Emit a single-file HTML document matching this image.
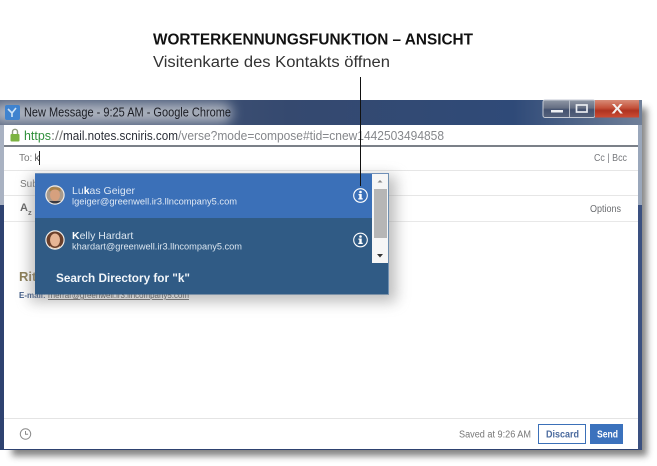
<!DOCTYPE html>
<html><head><meta charset="utf-8"><style>
html,body{margin:0;padding:0;background:#fff;width:657px;height:466px;overflow:hidden}
svg{display:block;filter:blur(.3px)}
text{font-family:"Liberation Sans",sans-serif}
</style></head><body>
<svg width="657" height="466" viewBox="0 0 657 466" xmlns="http://www.w3.org/2000/svg">
<defs>
<linearGradient id="tb" x1="0" x2="1" y1="0" y2="0"><stop offset="0" stop-color="#51607c"/><stop offset=".45" stop-color="#35496f"/><stop offset=".8" stop-color="#2f4a78"/><stop offset="1" stop-color="#6f7f98"/></linearGradient>
<linearGradient id="wb" x1="0" x2="0" y1="0" y2="1"><stop offset="0" stop-color="#8f97a5"/><stop offset=".45" stop-color="#666f83"/><stop offset=".55" stop-color="#445270"/><stop offset="1" stop-color="#55627c"/></linearGradient>
<linearGradient id="cb" x1="0" x2="0" y1="0" y2="1"><stop offset="0" stop-color="#d88c78"/><stop offset=".45" stop-color="#c4513a"/><stop offset=".6" stop-color="#ae3320"/><stop offset="1" stop-color="#cc4c34"/></linearGradient>
<filter id="s4" x="-10%" y="-10%" width="120%" height="120%"><feGaussianBlur stdDeviation="3.5"/></filter>
<filter id="s8" x="-10%" y="-20%" width="120%" height="140%"><feGaussianBlur stdDeviation="7"/></filter>
<filter id="s7" x="-20%" y="-80%" width="140%" height="260%"><feGaussianBlur stdDeviation="6"/></filter>
<clipPath id="tc"><rect x="0" y="100" width="642" height="25"/></clipPath>
<clipPath id="a1"><circle cx="55" cy="195" r="8.5"/></clipPath>
<clipPath id="a2"><circle cx="55" cy="240" r="8.5"/></clipPath>
</defs>

<text x="153" y="44.5" font-size="15.5" font-weight="700" fill="#111" textLength="320" lengthAdjust="spacingAndGlyphs">WORTERKENNUNGSFUNKTION – ANSICHT</text>
<text x="153" y="67" font-size="15.5" fill="#333" textLength="237" lengthAdjust="spacingAndGlyphs">Visitenkarte des Kontakts öffnen</text>

<!-- window shadow -->
<rect x="12" y="108" width="635" height="348" fill="#666" filter="url(#s4)" opacity=".8"/>
<!-- frame -->
<rect x="0" y="100" width="642" height="350" fill="#2e4270"/>
<rect x="0" y="100" width="642" height="25" fill="url(#tb)"/>
<rect x="0" y="125" width="4" height="80" fill="#a9b2c2"/>
<rect x="638" y="125" width="4" height="80" fill="#9aa7bb"/>
<rect x="638" y="205" width="4" height="245" fill="#3a5080"/>
<g clip-path="url(#tc)"><rect x="-8" y="103" width="240" height="20" rx="10" fill="#b4b9c3" filter="url(#s7)" opacity=".95"/></g>

<!-- favicon -->
<rect x="5" y="105" width="15" height="15" rx="2" fill="#3f83cf"/>
<path d="M8 109l4 4 4-5M12 113v4" stroke="#cfe4f7" stroke-width="1.6" fill="none"/>
<text x="24" y="116.5" font-size="12.5" fill="#1b1d24" textLength="207" lengthAdjust="spacingAndGlyphs">New Message - 9:25 AM - Google Chrome</text>

<!-- window buttons -->
<rect x="543" y="100" width="52" height="17.5" rx="2" fill="url(#wb)" stroke="#c4cad4" stroke-width="1"/>
<line x1="569.5" y1="100" x2="569.5" y2="117" stroke="#b5bbc6"/>
<rect x="595" y="100" width="44" height="17.5" fill="url(#cb)"/>
<rect x="551" y="110" width="12" height="2.5" fill="#eef0f3"/>
<rect x="576.5" y="105" width="10.5" height="7" fill="none" stroke="#e8ebf0" stroke-width="1.7"/>
<text x="611.5" y="113.5" font-size="14" font-weight="700" fill="#f4f0ee" textLength="11.5" lengthAdjust="spacingAndGlyphs">X</text>

<!-- address bar -->
<rect x="4" y="125" width="634" height="20" fill="#fff"/>
<rect x="4" y="145" width="634" height="2" fill="#7b8088"/>
<rect x="10.5" y="134" width="9" height="7.5" rx="1" fill="#7cb342"/>
<path d="M12.5 134v-2.2a2.5 2.5 0 0 1 5 0V134" fill="none" stroke="#8f9a80" stroke-width="1.4"/>
<text x="24" y="140" font-size="13" fill="#2f8f3a" textLength="27" lengthAdjust="spacingAndGlyphs">https</text>
<text x="51" y="140" font-size="13" fill="#777" textLength="12" lengthAdjust="spacingAndGlyphs">://</text>
<text x="63" y="140" font-size="13" fill="#2b2f38" textLength="115" lengthAdjust="spacingAndGlyphs">mail.notes.scniris.com</text>
<text x="178" y="140" font-size="13" fill="#85878b" textLength="266" lengthAdjust="spacingAndGlyphs">/verse?mode=compose#tid=cnew1442503494858</text>

<!-- content -->
<rect x="4" y="147" width="634" height="302" fill="#fff"/>
<text x="19" y="161" font-size="10" fill="#777">To:</text>
<text x="34.500" y="161" font-size="10" fill="#555">k</text>
<rect x="39" y="151" width="1" height="14" fill="#222"/>
<text x="594" y="161" font-size="10.5" fill="#77797d" textLength="33" lengthAdjust="spacingAndGlyphs">Cc | Bcc</text>
<line x1="4" x2="638" y1="170.5" y2="170.5" stroke="#e6e6e6"/>
<text x="20" y="187" font-size="10" fill="#777">Sub</text>
<line x1="4" x2="638" y1="195.5" y2="195.5" stroke="#e6e6e6"/>
<text x="20" y="211" font-size="11" font-weight="700" fill="#666">A</text>
<text x="28" y="215" font-size="7.5" font-weight="700" fill="#666">z</text>
<text x="590" y="212" font-size="10.5" fill="#6b6d70" textLength="31" lengthAdjust="spacingAndGlyphs">Options</text>
<line x1="4" x2="638" y1="221.5" y2="221.5" stroke="#e8e8e8"/>

<text x="19" y="281" font-size="13" font-weight="700" fill="#8b7d55">Ritt</text>
<text x="19" y="298" font-size="8" font-weight="700" fill="#3f5a86">E-mail:</text>
<text x="48" y="298" font-size="8" fill="#444" text-decoration="underline" textLength="141" lengthAdjust="spacingAndGlyphs">rherrar@greenwell.ir3.llncompany5.com</text>

<line x1="4" x2="638" y1="418.5" y2="418.5" stroke="#e4e4e4"/>
<circle cx="25.5" cy="434" r="5.2" fill="none" stroke="#8a8a8a" stroke-width="1"/>
<path d="M25.5 431v3.3h2.6" fill="none" stroke="#8a8a8a" stroke-width="1"/>
<text x="459" y="437.5" font-size="10" fill="#777" textLength="72" lengthAdjust="spacingAndGlyphs">Saved at 9:26 AM</text>
<rect x="538.5" y="424.5" width="47" height="19" fill="#fff" stroke="#3b70b8"/>
<text x="546" y="437.5" font-size="10" font-weight="700" fill="#4a6a9e" textLength="33" lengthAdjust="spacingAndGlyphs">Discard</text>
<rect x="590" y="424" width="33" height="20" fill="#3b72bd"/>
<text x="597" y="437.5" font-size="10" font-weight="700" fill="#fff" textLength="21" lengthAdjust="spacingAndGlyphs">Send</text>

<!-- dropdown -->
<rect x="30" y="176" width="366" height="126" fill="#888" filter="url(#s8)" opacity=".55"/>
<rect x="35" y="173" width="354" height="121.5" fill="#305b85"/>
<rect x="35" y="173" width="337" height="45" fill="#3b70b8"/>
<rect x="372" y="173" width="16" height="90" fill="#f6f6f6"/>
<rect x="388" y="173" width="1" height="121" fill="#6f8fb0"/>
<rect x="35" y="173" width="354" height="1" fill="#6f8fb8"/>
<rect x="374" y="189" width="13" height="49" fill="#b6b6b6"/>
<path d="M377.5 182.5h5l-2.5-2.5z" fill="#888"/>
<path d="M377 254h6l-3 3.5z" fill="#333"/>

<!-- avatars -->
<circle cx="55" cy="195" r="9.7" fill="#eeebe6"/>
<g clip-path="url(#a1)"><rect x="45" y="185" width="20" height="20" fill="#a89a8c"/><ellipse cx="55" cy="195" rx="5" ry="6" fill="#d6a07e"/><rect x="46" y="201" width="18" height="6" fill="#3a3a42"/><path d="M49.5 192q5.5-5 11 0l0-4-11-1.5z" fill="#a8824a"/></g>
<circle cx="55" cy="240" r="9.7" fill="#eeebe6"/>
<g clip-path="url(#a2)"><rect x="45" y="230" width="20" height="20" fill="#6a3f2a"/><ellipse cx="55" cy="240" rx="5" ry="6.5" fill="#e6b595"/><path d="M50 246q5 4 10 0v5H50z" fill="#efd2ba"/></g>

<!-- item text -->
<text x="72" y="194" font-size="10.5" fill="#dbe6f4">Lu<tspan font-weight="700" fill="#fff">k</tspan>as Geiger</text>
<text x="72" y="204.5" font-size="9" fill="#dfe8f4" textLength="165" lengthAdjust="spacingAndGlyphs">lgeiger@greenwell.ir3.llncompany5.com</text>
<text x="72" y="239" font-size="10.5" fill="#dbe6f0"><tspan font-weight="700" fill="#fff">K</tspan>elly Hardart</text>
<text x="72" y="249.5" font-size="9" fill="#dbe6f0" textLength="170" lengthAdjust="spacingAndGlyphs">khardart@greenwell.ir3.llncompany5.com</text>
<text x="56" y="282" font-size="12" font-weight="700" fill="#f2f6fa" textLength="134" lengthAdjust="spacingAndGlyphs">Search Directory for "k"</text>

<!-- info icons -->
<g fill="none" stroke="#fff" stroke-width="1.1"><circle cx="360.5" cy="195.5" r="6.8"/><circle cx="360.5" cy="240" r="6.8"/></g>
<g fill="#fff"><circle cx="360.5" cy="192" r="1.3"/><path d="M358.5 194h3.2v4.3h1v1.2h-4.4v-1.2h1v-3.1h-.8z"/><circle cx="360.5" cy="236.5" r="1.3"/><path d="M358.5 238.5h3.2v4.3h1v1.2h-4.4v-1.2h1v-3.1h-.8z"/></g>

<!-- callout line -->
<rect x="360" y="77" width="1" height="109" fill="#111"/>
</svg>
</body></html>
